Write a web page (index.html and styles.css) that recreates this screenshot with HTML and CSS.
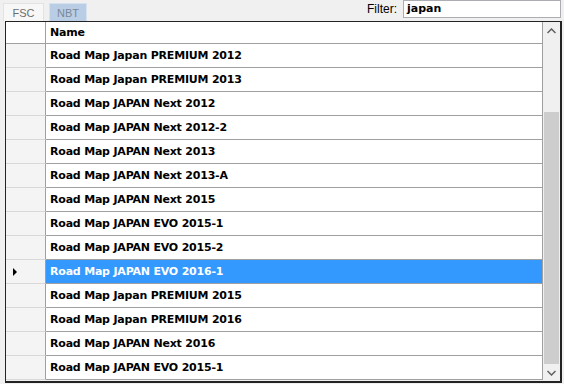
FILE: index.html
```html
<!DOCTYPE html>
<html>
<head>
  <title>Map Versions</title>
  <link rel="stylesheet" href="styles.css">
</head>
<body>
  <div class="toolbar">
    <div class="tabs">
      <div class="tab">FSC</div>
      <div class="tab active">NBT</div>
    </div>
    <div class="filter">
      <span class="filter-label">Filter:</span>
      <div class="filter-input">japan</div>
    </div>
  </div>

  <div class="grid">
    <div class="grid-body">
      <div class="row header-row">
        <div class="row-head"></div>
        <div class="cell">Name</div>
      </div>
      <div class="row"><div class="row-head"></div><div class="cell">Road Map Japan PREMIUM 2012</div></div>
      <div class="row"><div class="row-head"></div><div class="cell">Road Map Japan PREMIUM 2013</div></div>
      <div class="row"><div class="row-head"></div><div class="cell">Road Map JAPAN Next 2012</div></div>
      <div class="row"><div class="row-head"></div><div class="cell">Road Map JAPAN Next 2012-2</div></div>
      <div class="row"><div class="row-head"></div><div class="cell">Road Map JAPAN Next 2013</div></div>
      <div class="row"><div class="row-head"></div><div class="cell">Road Map JAPAN Next 2013-A</div></div>
      <div class="row"><div class="row-head"></div><div class="cell">Road Map JAPAN Next 2015</div></div>
      <div class="row"><div class="row-head"></div><div class="cell">Road Map JAPAN EVO 2015-1</div></div>
      <div class="row"><div class="row-head"></div><div class="cell">Road Map JAPAN EVO 2015-2</div></div>
      <div class="row selected"><div class="row-head"><span class="pointer"></span></div><div class="cell">Road Map JAPAN EVO 2016-1</div></div>
      <div class="row"><div class="row-head"></div><div class="cell">Road Map Japan PREMIUM 2015</div></div>
      <div class="row"><div class="row-head"></div><div class="cell">Road Map Japan PREMIUM 2016</div></div>
      <div class="row"><div class="row-head"></div><div class="cell">Road Map JAPAN Next 2016</div></div>
      <div class="row"><div class="row-head"></div><div class="cell">Road Map JAPAN EVO 2015-1</div></div>
    </div>

    <div class="scrollbar">
      <div class="arrow">
        <svg width="9" height="6" viewBox="0 0 9 6"><path d="M0.5 5 L4.5 1 L8.5 5" fill="none" stroke="#606060" stroke-width="1.5"/></svg>
      </div>
      <div class="track">
        <div class="thumb"></div>
      </div>
      <div class="arrow">
        <svg width="9" height="6" viewBox="0 0 9 6"><path d="M0.5 1 L4.5 5 L8.5 1" fill="none" stroke="#606060" stroke-width="1.5"/></svg>
      </div>
    </div>
  </div>
</body>
</html>
```

FILE: styles.css
```css
/* Main Styles */
body {
  font-family: Tahoma, "DejaVu Sans", sans-serif;
  font-size: 11px;
  margin: 0;
  padding: 0;
  background-color: #f0f0f0;
  width: 564px;
  height: 384px;
  overflow: hidden;
}

/* Toolbar Styles */
.toolbar {
  display: flex;
  justify-content: space-between;
  align-items: flex-start;
  height: 21px;
}

.tabs {
  display: flex;
  gap: 5px;
  padding: 3px 0 0 3px;
}

.tab {
  width: 41px;
  height: 18px;
  box-sizing: border-box;
  border: 1px solid #e3e3e3;
  border-bottom: none;
  background-color: #f7f7f7;
  color: #6d6d6d;
  text-align: center;
  line-height: 18px;
  font-family: "Liberation Sans", Arial, sans-serif;
  font-size: 11px;
}

.tab.active {
  width: 38px;
  background-color: #b9cde5;
  border-color: #d6e1ef;
  color: #7c8898;
}

.filter {
  display: flex;
  align-items: center;
  gap: 6px;
  padding-right: 3px;
}

.filter-label {
  font-family: "Liberation Sans", Arial, sans-serif;
  font-size: 12px;
  color: #000;
}

.filter-input {
  width: 158px;
  height: 18px;
  box-sizing: border-box;
  border: 1px solid #abadb3;
  background-color: #fff;
  padding-left: 3px;
  line-height: 16px;
  font-family: "DejaVu Sans", sans-serif;
  font-weight: bold;
  font-size: 11px;
}

/* Grid Styles */
.grid {
  display: flex;
  margin-left: 5px;
  width: 557px;
  height: 362px;
  box-sizing: border-box;
  border: 1px solid #232323;
  border-right-width: 2px;
  border-bottom-width: 2px;
  background-color: #f0f0f0;
}

.grid-body {
  flex: 1;
}

.row {
  display: flex;
  height: 24px;
}

.row-head {
  width: 40px;
  box-sizing: border-box;
  background-color: #f4f4f4;
  border-right: 1px solid #a0a0a0;
  border-bottom: 1px solid #d8d8d8;
  display: flex;
  align-items: center;
  padding-left: 7px;
}

.cell {
  flex: 1;
  box-sizing: border-box;
  background-color: #fff;
  border-right: 1px solid #a0a0a0;
  border-bottom: 1px solid #a0a0a0;
  padding-left: 4px;
  line-height: 23px;
  font-family: "DejaVu Sans", sans-serif;
  font-weight: bold;
  font-size: 11px;
  letter-spacing: -0.2px;
  color: #000;
  white-space: nowrap;
}

.header-row {
  height: 22px;
}

.header-row .row-head,
.header-row .cell {
  background-color: #fff;
  border-bottom: 1px solid #a0a0a0;
  line-height: 21px;
}

.selected .cell {
  background-color: #3399ff;
  color: #fff;
}

.pointer {
  width: 0;
  height: 0;
  border-top: 4px solid transparent;
  border-bottom: 4px solid transparent;
  border-left: 4px solid #000;
}

/* Scrollbar Styles */
.scrollbar {
  width: 17px;
  display: flex;
  flex-direction: column;
  background-color: #f0f0f0;
}

.arrow {
  height: 17px;
  display: flex;
  align-items: center;
  justify-content: center;
}

.track {
  flex: 1;
  display: flex;
  flex-direction: column;
  padding: 73px 1px 0 1px;
}

.thumb {
  flex: 1;
  background-color: #cdcdcd;
}
```
